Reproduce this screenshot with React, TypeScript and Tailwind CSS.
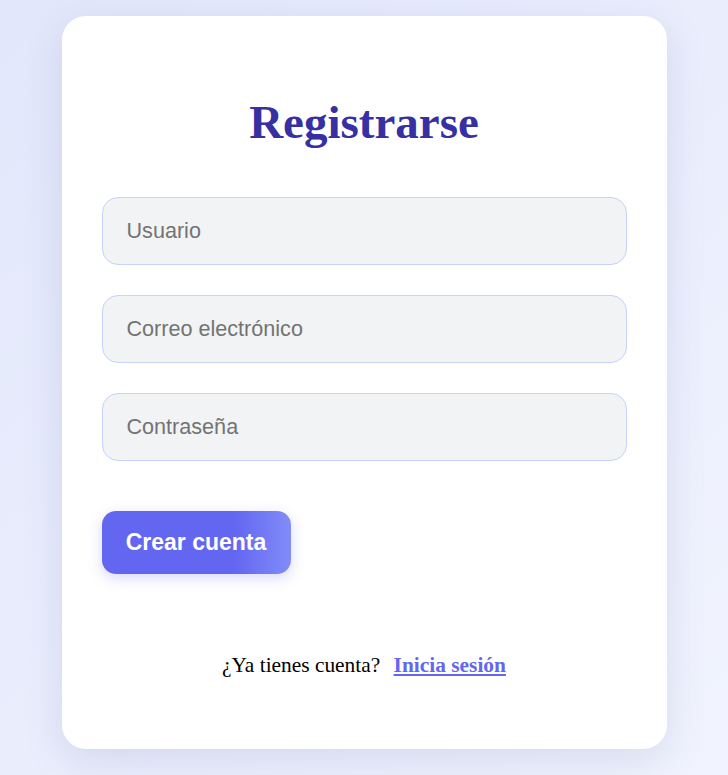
export default function App() {
  return (
    <div className="min-h-[775px] w-full bg-gradient-to-br from-[#e2e7fb] to-[#f1f4fe] flex justify-center pt-4 pb-6">
      <div className="w-[605px] h-[733px] bg-white rounded-[24px] shadow-[0_12px_40px_rgba(70,80,150,0.14)] px-10 pt-[82px] flex flex-col">

        {/* TITLE */}
        <h1 className="text-center text-[47px] leading-[48px] font-bold text-[#3730a3] [font-family:'Liberation_Serif',serif]">
          Registrarse
        </h1>

        {/* FIELDS */}
        <div className="mt-[51px] flex flex-col gap-[30px]">
          <input
            type="text"
            placeholder="Usuario"
            className="h-[68px] w-full rounded-2xl border border-[#c7d2fe] bg-[#f2f3f5] px-6 text-[21.6px] text-gray-700 placeholder:text-[#737373] outline-none [font-family:'Liberation_Sans',sans-serif]"
          />
          <input
            type="email"
            placeholder="Correo electrónico"
            className="h-[68px] w-full rounded-2xl border border-[#c7d2fe] bg-[#f2f3f5] px-6 text-[21.6px] text-gray-700 placeholder:text-[#737373] outline-none [font-family:'Liberation_Sans',sans-serif]"
          />
          <input
            type="password"
            placeholder="Contraseña"
            className="h-[68px] w-full rounded-2xl border border-[#c7d2fe] bg-[#f2f3f5] px-6 text-[21.6px] text-gray-700 placeholder:text-[#737373] outline-none [font-family:'Liberation_Sans',sans-serif]"
          />
        </div>

        {/* ACTION */}
        <div className="mt-[50px]">
          <button className="h-[63px] w-[189px] rounded-[14px] bg-[linear-gradient(90deg,#6366f1_0%,#6366f1_70%,#818cf8_100%)] text-white font-bold text-[23px] shadow-[0_4px_14px_rgba(99,102,241,0.25)] [font-family:'Liberation_Sans',sans-serif]">
            Crear cuenta
          </button>
        </div>

        {/* FOOTER */}
        <p className="mt-[76px] text-center text-[21.4px] leading-[31px] text-black [font-family:'Liberation_Serif',serif]">
          ¿Ya tienes cuenta?{" "}
          <a href="#" className="ml-2 font-bold text-[#6366f1] underline">
            Inicia sesión
          </a>
        </p>
      </div>
    </div>
  );
}
